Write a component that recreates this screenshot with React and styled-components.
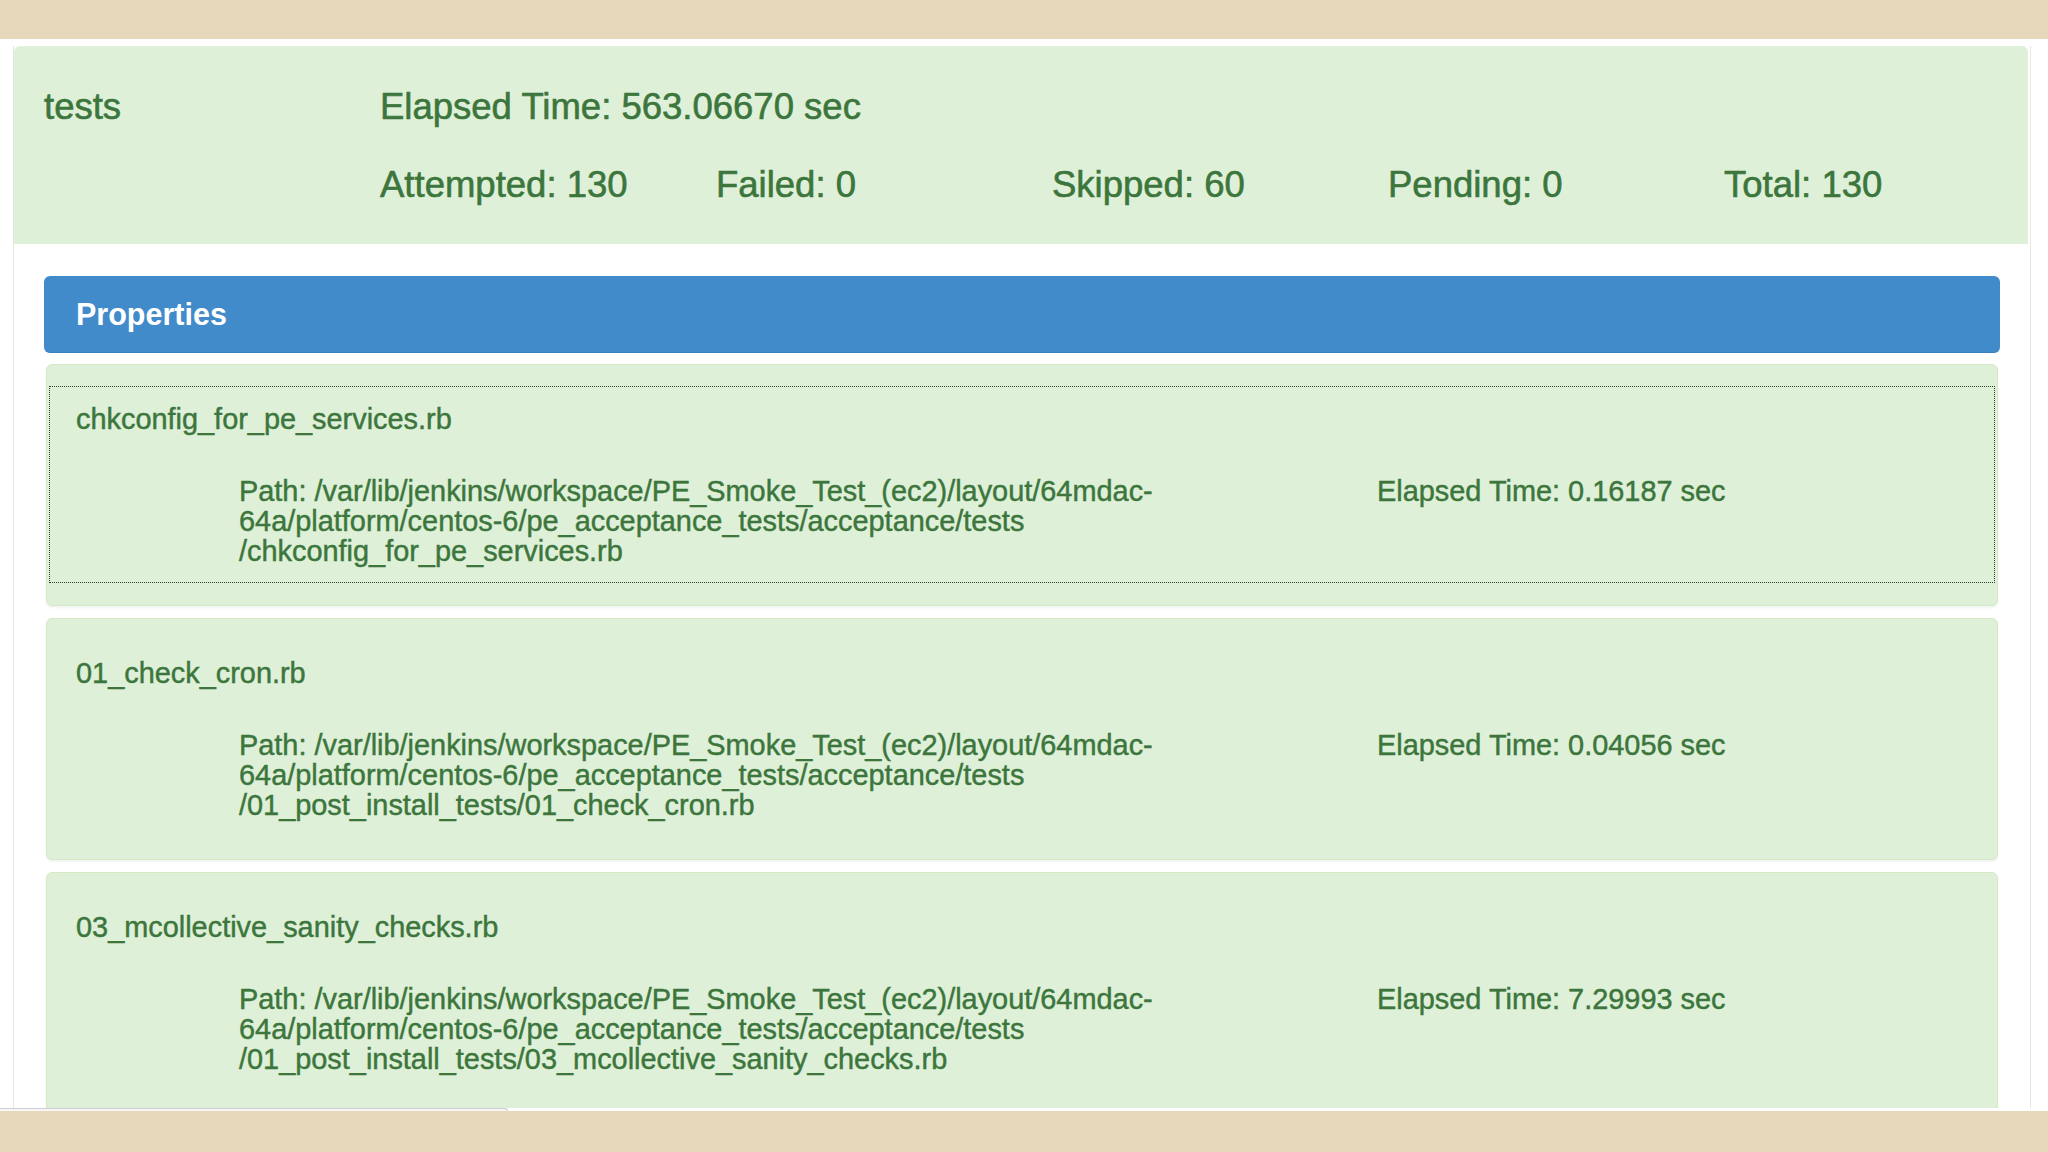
import React from "react"
import styled, { createGlobalStyle } from "styled-components"

const GlobalStyle = createGlobalStyle`
    html, body {
        margin: 0;
        padding: 0;
        background: #fff;
    }
    body {
        font-family: "Liberation Sans", Arial, Helvetica, sans-serif;
    }
    * {
        box-sizing: border-box;
    }
`

const Page = styled.div`
    width: 2048px;
    height: 1152px;
    display: flex;
    flex-direction: column;
    overflow: hidden;
    background: #fff;
`

const Band = styled.div`
    flex-shrink: 0;
    height: ${props => props.height}px;
    background: #e7d7bb;
`

const Main = styled.div`
    flex: 1;
    min-height: 0;
    overflow: hidden;
    padding-top: 7px;
`

const Container = styled.div`
    width: 2018px;
    height: 100%;
    margin-left: 13px;
    border-left: 1px solid #e4e8df;
    border-right: 1px solid #e4e8df;
`

const Summary = styled.div`
    margin-right: 2px;
    padding: 41px 30px 39px;
    background: #dff0d8;
    border-radius: 6px 6px 0 0;
    display: grid;
    grid-template-columns: repeat(6, 336px);
    row-gap: 38px;
    color: #3c763d;
    font-size: 36.5px;
    line-height: 40px;
    -webkit-text-stroke: 0.6px #3c763d;
    white-space: nowrap;
`

const SummaryCell = styled.div`
    grid-column: ${props => props.col} / span ${props => props.span || 1};
`

const Body = styled.div`
    padding: 32px 30px 0 30px;
`

const PanelHeading = styled.div`
    height: 77px;
    display: flex;
    align-items: center;
    padding-left: 32px;
    background: #428bca;
    border-bottom: 1px solid #3a7fbd;
    border-radius: 6px;
    color: #fff;
    font-size: 30.5px;
    font-weight: 700;
`

const List = styled.div`
    display: flex;
    flex-direction: column;
    gap: 12px;
    padding: 11px 2px 0;
`

const Card = styled.div`
    padding: 22px 3px 23px;
    background: #dff0d8;
    border: 1px solid #d6e9c6;
    border-radius: 6px;
    box-shadow: 0 2px 2px rgba(60, 118, 61, 0.08);
`

const Entry = styled.div`
    padding: 17px 22px 16px 26px;
    outline: ${props => (props.focused ? "1px dotted #2a3f2a" : "none")};
    color: #3c763d;
    font-size: 28.9px;
    line-height: 30px;
    -webkit-text-stroke: 0.45px #3c763d;
`

const EntryTitle = styled.div`
    margin-bottom: 42px;
`

const Details = styled.div`
    display: grid;
    grid-template-columns: 163px 1138px auto;
`

const PathLine = styled.div`
    white-space: nowrap;
`

const Elapsed = styled.div`
    grid-column: 3;
    white-space: nowrap;
`

const Tab = styled.div`
    flex-shrink: 0;
    width: 508px;
    height: 3px;
    background: #f7f7f7;
    border-top: 1px solid #cfcfcf;
    border-right: 1px solid #cfcfcf;
    border-top-right-radius: 3px;
`

const stats = [
    ["Attempted", 130],
    ["Failed", 0],
    ["Skipped", 60],
    ["Pending", 0],
    ["Total", 130],
]

const base = "Path: /var/lib/jenkins/workspace/PE_Smoke_Test_(ec2)/layout/64mdac-"
const mid = "64a/platform/centos-6/pe_acceptance_tests/acceptance/tests"

const tests = [
    {
        name: "chkconfig_for_pe_services.rb",
        path: [base, mid, "/chkconfig_for_pe_services.rb"],
        time: "0.16187",
        focused: true,
    },
    {
        name: "01_check_cron.rb",
        path: [base, mid, "/01_post_install_tests/01_check_cron.rb"],
        time: "0.04056",
    },
    {
        name: "03_mcollective_sanity_checks.rb",
        path: [base, mid, "/01_post_install_tests/03_mcollective_sanity_checks.rb"],
        time: "7.29993",
    },
]

const App = () => {
    return (
        <Page>
            <GlobalStyle />
            <Band height={39} />
            <Main>
                <Container>
                    <Summary>
                        <SummaryCell col={1}>tests</SummaryCell>
                        <SummaryCell col={2} span={5}>
                            Elapsed Time: 563.06670 sec
                        </SummaryCell>
                        {stats.map(([label, value], i) => (
                            <SummaryCell key={label} col={i + 2}>
                                {label}: {value}
                            </SummaryCell>
                        ))}
                    </Summary>
                    <Body>
                        <PanelHeading>Properties</PanelHeading>
                        <List>
                            {tests.map(t => (
                                <Card key={t.name}>
                                    <Entry focused={t.focused}>
                                        <EntryTitle>{t.name}</EntryTitle>
                                        <Details>
                                            <div />
                                            <div>
                                                {t.path.map(line => (
                                                    <PathLine key={line}>{line}</PathLine>
                                                ))}
                                            </div>
                                            <Elapsed>Elapsed Time: {t.time} sec</Elapsed>
                                        </Details>
                                    </Entry>
                                </Card>
                            ))}
                        </List>
                    </Body>
                </Container>
            </Main>
            <Tab />
            <Band height={41} />
        </Page>
    )
}

export default App
